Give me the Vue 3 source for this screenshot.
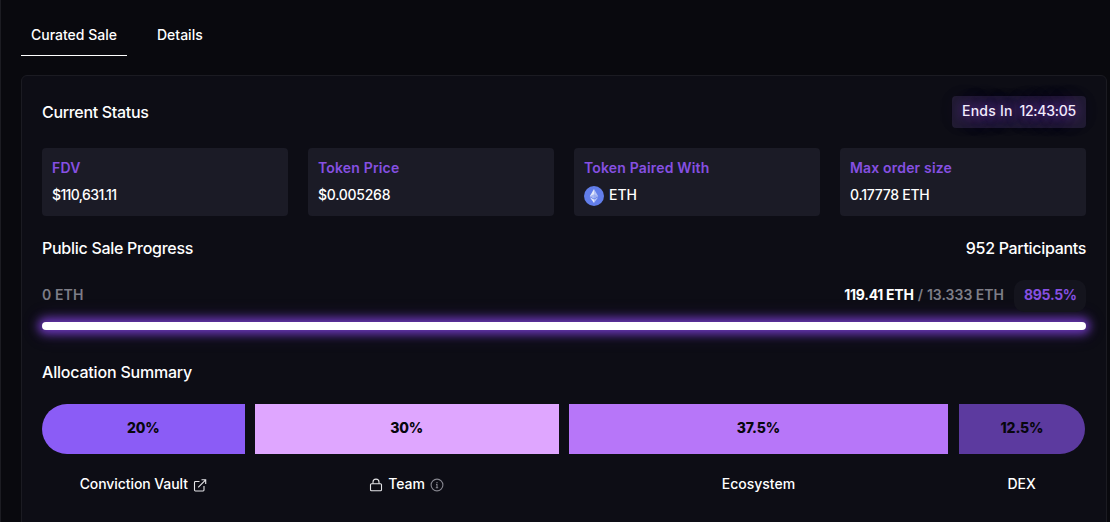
<template>
  <div class="page">
    <nav class="tabs">
      <button class="tab active">Curated Sale</button>
      <button class="tab">Details</button>
    </nav>

    <section class="card">
      <div class="status-header">
        <h3 class="title-status">Current Status</h3>
        <div class="countdown">
          <span class="ends">Ends In</span>
          <span class="clock">12:43:05</span>
        </div>
      </div>

      <div class="stats">
        <div v-for="stat in stats" :key="stat.label" class="stat">
          <p class="stat-label">{{ stat.label }}</p>
          <p class="stat-value" :class="stat.name">
            <svg v-if="stat.name === 'paired'" class="eth" viewBox="0 0 20 20">
              <circle cx="10" cy="10" r="10" fill="#627eea" />
              <path d="M10 3 5.8 10.2 10 12.6z" fill="#e4e9fb" />
              <path d="M10 3v9.6l4.2-2.4z" fill="#b5c3f5" />
              <path d="M5.8 10.2 10 8.3l4.2 1.9L10 12.6z" fill="#8fa3ee" fill-opacity="0.7" />
              <path d="M5.8 11.2 10 17v-3.4z" fill="#e4e9fb" />
              <path d="M10 13.6V17l4.2-5.8z" fill="#b5c3f5" />
            </svg>
            <span>{{ stat.value }}</span>
          </p>
        </div>
      </div>

      <div class="progress-header">
        <h3 class="title-progress">Public Sale Progress</h3>
        <h3 class="title-participants">952 Participants</h3>
      </div>

      <div class="progress-info">
        <span class="zero">0 ETH</span>
        <div class="raised">
          <span class="raised-now">119.41 ETH</span>
          <span class="slash">/</span>
          <span class="raised-goal">13.333 ETH</span>
          <span class="percent">895.5%</span>
        </div>
      </div>
      <div class="progress-bar"></div>

      <h3 class="allocation-title">Allocation Summary</h3>
      <div class="allocation">
        <div v-for="item in allocation" :key="item.name" class="allocation-item">
          <div class="segment" :class="item.name">{{ item.percent }}</div>
          <div class="allocation-label" :class="item.name">
            <svg v-if="item.name === 'team'" class="icon lock" viewBox="0 0 14 14">
              <rect x="1.5" y="5.8" width="11" height="7" rx="1" />
              <path d="M4 5.8V4.1a3 3 0 0 1 6 0v1.7" />
            </svg>
            <span>{{ item.label }}</span>
            <svg v-if="item.name === 'vault'" class="icon link" viewBox="0 0 14 14">
              <path d="M6.5 3.5H2.4a.9.9 0 0 0-.9.9v7.7c0 .5.4.9.9.9h7.7c.5 0 .9-.4.9-.9V8" />
              <path d="M8.5 1.8h4.2V6M12.7 1.8 5.2 9.3" />
            </svg>
            <svg v-if="item.name === 'team'" class="icon info" viewBox="0 0 14 14">
              <circle cx="7" cy="7" r="5.9" />
              <path d="M6 6.4h1v3.4M5.8 9.8h2.4M7 4v.9" />
            </svg>
          </div>
        </div>
      </div>
    </section>
  </div>
</template>

<script setup>
const stats = [
  { name: 'fdv', label: 'FDV', value: '$110,631.11' },
  { name: 'price', label: 'Token Price', value: '$0.005268' },
  { name: 'paired', label: 'Token Paired With', value: 'ETH' },
  { name: 'order', label: 'Max order size', value: '0.17778 ETH' }
];

const allocation = [
  { name: 'vault', label: 'Conviction Vault', percent: '20%' },
  { name: 'team', label: 'Team', percent: '30%' },
  { name: 'ecosystem', label: 'Ecosystem', percent: '37.5%' },
  { name: 'dex', label: 'DEX', percent: '12.5%' }
];
</script>

<style>
body {
  background: #09090e;
  overflow: hidden;
}
</style>

<style scoped>
.page {
  box-sizing: border-box;
  height: 522px;
  padding: 15px 3px 0 20px;
  border-left: 1px solid #1c1c22;
  overflow: hidden;
  background: #09090e;
  color: #fff;
  font-family: Inter, "Liberation Sans", sans-serif;
  font-size: 14px;
  font-weight: 500;
  line-height: 20px;
  white-space: nowrap;
}

h3,
p {
  margin: 0;
  font: inherit;
}

h3 {
  font-size: 16px;
  line-height: 24px;
}

.tabs {
  display: flex;
  gap: 20px;
}

.tab {
  box-sizing: border-box;
  height: 41px;
  padding: 0 10px;
  border: 0;
  border-bottom: 1px solid transparent;
  background: none;
  color: inherit;
  font: inherit;
}

.tab.active {
  width: 106px;
  border-bottom-color: #fff;
}

.card {
  box-sizing: border-box;
  height: 470px;
  margin-top: 19px;
  padding: 20px;
  border: 1px solid #1b1b22;
  border-radius: 6px;
  background: #0d0d15;
}

.status-header,
.progress-header,
.progress-info {
  display: flex;
  align-items: center;
  justify-content: space-between;
}

.title-status {
  letter-spacing: -0.32px;
}

.title-progress {
  letter-spacing: -0.28px;
}

.title-participants {
  letter-spacing: -0.32px;
}

.countdown {
  box-sizing: border-box;
  display: flex;
  align-items: center;
  justify-content: space-between;
  width: 134px;
  height: 32px;
  padding: 0 10px 2px;
  border-radius: 4px;
  background: #231e33;
  color: #f3edfc;
  text-shadow: 0 0 10px rgba(147, 64, 240, 0.55), 0 0 20px rgba(147, 64, 240, 0.5), 0 0 32px rgba(147, 64, 240, 0.4);
}

.ends {
  letter-spacing: 0.25px;
}

.clock {
  letter-spacing: -0.25px;
}

.stats {
  display: grid;
  grid-template-columns: repeat(4, 1fr);
  gap: 20px;
  margin-top: 20px;
}

.stat {
  box-sizing: border-box;
  height: 68px;
  padding: 10px;
  border-radius: 4px;
  background: #1b1b26;
}

.stat-label {
  color: #8650e2;
  font-weight: 600;
  letter-spacing: 0.17px;
}

.stat-value {
  display: flex;
  align-items: center;
  gap: 5px;
  height: 20px;
  margin-top: 7px;
}

.stat-value.fdv {
  letter-spacing: -0.62px;
}

.stat-value.price,
.stat-value.order {
  letter-spacing: -0.26px;
}

.eth {
  width: 20px;
  height: 20px;
  margin-top: 2px;
}

.progress-header {
  margin-top: 20px;
}

.progress-info {
  height: 32px;
  margin-top: 20px;
  font-weight: 600;
}

.zero,
.slash,
.raised-goal,
.raised-now {
  padding-bottom: 2px;
}

.zero,
.slash,
.raised-goal {
  color: #7d7d87;
}

.zero {
  letter-spacing: 0.1px;
}

.raised {
  display: flex;
  align-items: center;
  gap: 4px;
}

.raised-now {
  font-weight: 700;
  letter-spacing: -0.27px;
}

.percent {
  box-sizing: border-box;
  width: 72px;
  height: 32px;
  margin-left: 6px;
  padding: 5px 10px;
  border-radius: 10px;
  background: #14141d;
  color: #8650e2;
  font-weight: 700;
  letter-spacing: -0.3px;
}

.progress-bar {
  height: 8px;
  margin-top: 10px;
  border-radius: 4px;
  background: #fff;
  box-shadow: 0 0 10px 4px #6b37b8, 0 0 20px 2px rgba(107, 55, 184, 0.3);
}

.allocation-title {
  margin-top: 30px;
  letter-spacing: -0.2px;
}

.allocation {
  display: grid;
  grid-template-columns: 20fr 30fr 37.5fr 12.5fr;
  gap: 10px;
  width: 1043px;
  margin-top: 20px;
}

.segment {
  height: 50px;
  color: #07070d;
  font-weight: 800;
  letter-spacing: -0.15px;
  line-height: 48px;
  text-align: center;
}

.segment.vault {
  border-radius: 25px 0 0 25px;
  background: #8b5cf6;
}

.segment.team {
  background: #dfa6ff;
}

.segment.ecosystem {
  background: #b776f9;
}

.segment.dex {
  margin-left: 0.6px;
  border-radius: 0 25px 25px 0;
  background: #5c3a9f;
}

.allocation-label {
  display: flex;
  align-items: center;
  justify-content: center;
  gap: 5px;
  margin-top: 20px;
}

.allocation-label.vault {
  letter-spacing: -0.08px;
}

.icon {
  width: 14px;
  height: 14px;
  margin-top: 1px;
  fill: none;
  stroke: #e4e4e7;
  stroke-width: 1.1;
}

.icon.info {
  stroke: #85858e;
}
</style>
